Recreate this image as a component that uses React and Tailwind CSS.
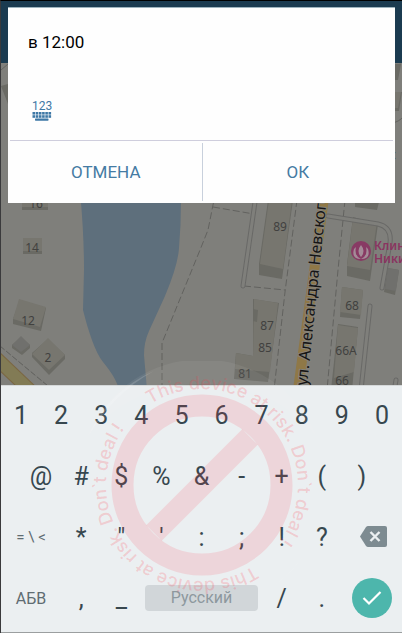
import React from "react";

const houses = [
  { label: "16", x: 36, y: 208 },
  { label: "14", x: 32, y: 252 },
  { label: "12", x: 28, y: 325 },
  { label: "2", x: 48, y: 362 },
  { label: "89", x: 280, y: 231 },
  { label: "87", x: 267, y: 330 },
  { label: "85", x: 265, y: 352 },
  { label: "81", x: 245, y: 378 },
  { label: "68", x: 352, y: 310 },
  { label: "66А", x: 346, y: 355 },
  { label: "66", x: 342, y: 385 },
];

const digits = ["1", "2", "3", "4", "5", "6", "7", "8", "9", "0"];
const symbols = ["@", "#", "$", "%", "&", "-", "+", "(", ")"];
const punctuation = ["*", '"', "'", ":", ";", "!", "?"];

function MapBackground() {
  return (
    <svg
      className="absolute inset-0 h-full w-full"
      viewBox="1 1 401 384"
      preserveAspectRatio="xMidYMin slice"
      aria-hidden="true"
    >
      <rect width="402" height="400" fill="#7f7f7b" />

      {/* River */}
      <path
        d="M76 150 C80 190 84 225 84 270 L83 310 C88 330 95 352 103 362 C110 371 116 378 119 390 L147 390 L144 355 Q144 342 149 331 L165 296 Q178 265 179 248 Q181 225 181 200 L180 150Z"
        fill="#5e6f7c"
      />

      {/* Yellow road in the corner */}
      <path d="M-4 358 L36 396" stroke="#7b6743" strokeWidth="14" />
      <path d="M-4 358 L36 396" stroke="#827b55" strokeWidth="12" />
      <path d="M0 346 L48 386" stroke="#5f5f5c" strokeDasharray="6 2" fill="none" />

      {/* Main street */}
      <path d="M298 390 L325 190" stroke="#8f7847" strokeWidth="10" />

      {/* Footpaths */}
      <g fill="none" stroke="#62625f" strokeDasharray="7 3">
        <path d="M162 390 V343 L200 250 L208 230 L216 190" />
        <path d="M213 207 L254 214" />
        <path d="M297 200 L285 292 L274 390" />
        <path d="M244 286 L285 290" />
        <path d="M345 200 L338 270 L327 390" />
      </g>

      {/* Driveways */}
      <g fill="none" strokeLinecap="round">
        <path d="M256 195 L243 286" stroke="#696967" strokeWidth="5" />
        <path d="M256 195 L243 286" stroke="#7f7f7b" strokeWidth="3" />
        <path d="M370 306 L361 390" stroke="#696967" strokeWidth="5" />
        <path d="M370 306 L361 390" stroke="#7f7f7b" strokeWidth="3" />
        <path d="M396 380 L394 392" stroke="#696967" strokeWidth="5" />
        <path d="M396 380 L394 392" stroke="#7f7f7b" strokeWidth="3" />
        <path d="M392 123 Q399 122 403 117" stroke="#646461" />
        <path d="M1 70 L8 64 M400 64 L394 82" stroke="#646461" />
      </g>

      {/* Building walls */}
      <g fill="#6a6a64">
        <path d="M22 190 H48 V210 H22Z M23 240 H42 V254 H23Z" />
        <path d="M13 319 L20 300 L46 308 L41 331 L13 324Z" />
        <path d="M12 345 L21 337 L30 345 V348 L22 355 L12 348Z" />
        <path d="M32 353 L48 339 L65 355 V359 L49 375 L32 357Z" />
        <path d="M268 200 H293 L282 279 L259 275 V264Z" />
        <path d="M236 353 L253 356 V299 L279 303 L268 382 L234 379Z" />
        <path d="M355 202 H379 L377 210 L355 207Z" />
        <path d="M353 217 L378 224 L370 281 L347 276 V264Z" />
        <path d="M388 268 L399 270 L395 295 L384 292Z" />
        <path d="M342 287 L363 290 L360 319 L340 317Z" />
        <path d="M338 324 L358 327 L352 390 H331Z" />
        <path d="M1 86 L8 84 V104Z M394 64 H401 L398 80 H394Z M394 92 H402 L399 111 H394Z" />
      </g>

      {/* Roofs */}
      <g fill="#77766f">
        <path d="M22 190 H48 V207 H22Z M23 238 H42 V251 H23Z" />
        <path d="M19 299 L46 307 L40 327 L13 319Z" />
        <path d="M32 354 L48 338 L65 355 L49 370Z" />
        <path d="M269 200 H292 L283 269 L260 264Z" />
        <path d="M254 299 L278 303 L270 372 L235 369 L236 353 L253 356Z" />
        <path d="M353 218 L377 222 L370 270 L347 266Z" />
        <path d="M342 287 L363 290 L361 315 L340 312Z" />
        <path d="M338 325 L358 328 L354 372 L334 378Z" />
        <path d="M394 92 H401 L398 108 H394Z" />
      </g>
      <path d="M12 345 L21 336 L30 345 L21 352Z M388 268 L399 270 L396 291 L385 289Z" fill="#70706d" />
      <path d="M253 309 L258 310 L257 322 L253 321Z" fill="#6a6a64" />

      {/* Driveway around the clinic */}
      <g fill="none" strokeLinecap="round">
        <path d="M328 216 L378 224 Q392 227 390 243 L382 288" stroke="#696967" strokeWidth="5" />
        <path d="M328 216 L378 224 Q392 227 390 243 L382 288" stroke="#7f7f7b" strokeWidth="3" />
      </g>

      {houses.map((house) => (
        <text
          key={house.label}
          x={house.x}
          y={house.y}
          textAnchor="middle"
          fontSize="12"
          fontFamily="Noto Sans, sans-serif"
          fill="#41413f"
        >
          {house.label}
        </text>
      ))}

      <text
        transform="translate(307 386) rotate(-84)"
        fontSize="16"
        fontFamily="Noto Sans, sans-serif"
        fill="#151515"
        stroke="#85827a"
        strokeWidth="2"
        paintOrder="stroke"
      >
        ул. Александра Невского
      </text>

      {/* Clinic marker */}
      <circle cx="361" cy="251" r="10" fill="#883a64" />
      <g fill="#a48b98">
        <path d="M361 245 Q366 251 361 257 Q356 251 361 245Z" />
        <path d="M356 247 Q354 256 361 259 Q351 259 354 249Z M366 247 Q368 256 361 259 Q371 259 368 249Z" />
      </g>
      <g fontSize="12" fontWeight="600" fontFamily="Noto Sans, sans-serif" fill="#8a3460">
        <text x="374" y="250">Клин</text>
        <text x="374" y="263">Ники</text>
      </g>
      <text x="390" y="159" fontSize="12" fontFamily="Noto Sans, sans-serif" fill="#3d5a70">
        с
      </text>
    </svg>
  );
}

function NumericInputIcon() {
  return (
    <svg width="20" height="24" viewBox="0 0 20 24" fill="#3e78a6" aria-hidden="true">
      <text x="10" y="12" textAnchor="middle" fontSize="12" fontFamily="Roboto, sans-serif">
        123
      </text>
      {[0, 1, 2, 3, 4, 5].map((i) => (
        <g key={i}>
          <rect x={0.5 + i * 3.2} y="14" width="2.6" height="2.6" />
          <rect x={0.5 + i * 3.2} y="17.2" width="2.6" height="2.6" />
        </g>
      ))}
      <rect x="3" y="20.5" width="13.5" height="2.2" rx="0.6" />
    </svg>
  );
}

function TimeDialog() {
  return (
    <div
      role="dialog"
      aria-label="в 12:00"
      className="relative mx-[7px] mt-[6px] border-t border-[#9db3bd] bg-[#fefefe]"
    >
      <p className="px-5 pt-6 text-[17px] leading-5 text-black">в 12:00</p>
      <button type="button" aria-label="123" className="mt-[46px] ml-6 block">
        <NumericInputIcon />
      </button>
      <div className="mx-0.5 mt-[18px] grid grid-cols-2 border-t border-[#cfcedd] text-[17px] text-[#457ba3]">
        <button type="button" className="h-[62px] pt-0.5">
          ОТМЕНА
        </button>
        <button type="button" className="my-0.5 border-l border-[#c8d0dc] pt-0.5">
          ОК
        </button>
      </div>
    </div>
  );
}

function Key({ label, className = "col-span-2" }) {
  return (
    <button
      type="button"
      className={`flex h-[61px] items-center justify-center pb-0.5 ${className}`}
    >
      {label}
    </button>
  );
}

function Keyboard() {
  return (
    <div className="border-t border-b border-t-[#d5d8d9] border-b-[#9b9fa0] bg-[#ebeff1] pb-[2px] text-[#37474f]">
      <div className="grid grid-cols-20 text-[25px] leading-none">
        {digits.map((digit) => (
          <Key key={digit} label={digit} />
        ))}

        {symbols.map((symbol, i) => (
          <Key
            key={symbol}
            label={symbol}
            className={i === 0 ? "col-span-2 col-start-2" : "col-span-2"}
          />
        ))}

        <Key label="= \ <" className="col-span-3 col-start-1 text-[15px] text-[#5f6c72]" />
        {punctuation.map((symbol) => (
          <Key key={symbol} label={symbol} />
        ))}
        <button
          type="button"
          aria-label="Backspace"
          className="col-span-3 flex items-center justify-center pb-1 pl-1"
        >
          <svg width="27" height="21" viewBox="0 0 27 21" aria-hidden="true">
            <path d="M8 0 H25 Q27 0 27 2 V19 Q27 21 25 21 H8 Q7 21 6 20 L0 10.5 L6 1 Q7 0 8 0Z" fill="#7d8b91" />
            <path d="M10.5 6 L19.5 15 M19.5 6 L10.5 15" stroke="#ebeff1" strokeWidth="2.4" />
          </svg>
        </button>

        <Key label="АБВ" className="col-span-3 text-base text-[#5f6c72]" />
        <Key label="," />
        <Key label="_" />
        <div className="col-span-6 flex items-center px-1 pb-1">
          <button
            type="button"
            className="h-[26px] w-full rounded bg-[#d1d6d9] text-base leading-none text-[#8d989e]"
          >
            Русский
          </button>
        </div>
        <Key label="/" />
        <Key label="." />
        <div className="col-span-3 flex items-center justify-center pb-1">
          <button
            type="button"
            aria-label="Enter"
            className="flex size-10 items-center justify-center rounded-full bg-[#4db6ac]"
          >
            <svg width="20" height="16" viewBox="0 0 20 16" fill="none" aria-hidden="true">
              <path d="M1.5 8 L7 13.5 L18.5 2" stroke="white" strokeWidth="2.2" />
            </svg>
          </button>
        </div>
      </div>
    </div>
  );
}

// Translucent stamp that lies over both the map and the keyboard
function WarningStamp() {
  return (
    <svg
      className="pointer-events-none absolute bottom-[24px] left-1/2 size-[248px] -translate-x-1/2"
      viewBox="-124 -124 248 248"
    >
      <defs>
        <path id="stamp-top" d="M-96 0 A96 96 0 0 1 96 0 A96 96 0 0 1 -96 0" />
        <path id="stamp-bottom" d="M96 0 A96 96 0 0 1 -96 0 A96 96 0 0 1 96 0" />
      </defs>
      <path
        d="M-115 -48 A124 124 0 0 1 115 -48 Q70 -101 0 -101 Q-70 -101 -115 -48Z"
        fill="white"
        fillOpacity="0.06"
      />
      <path d="M-114 -48 A124 124 0 0 1 -48 -114 Q-90 -91 -114 -48Z" fill="white" fillOpacity="0.15" />
      <path d="M113 50 A124 124 0 0 1 62 107 Q97 86 113 50Z" fill="white" fillOpacity="0.4" />
      <g stroke="#ff3b4b" strokeOpacity="0.14" strokeWidth="22" fill="none">
        <path d="M-79.5 0 A79.5 79.5 0 1 1 79.5 0 A79.5 79.5 0 1 1 -79.5 0Z" />
        <path d="M-48 48 L48 -48" />
      </g>
      <g
        fill="#ff3b4b"
        fillOpacity="0.2"
        fontSize="18"
        fontWeight="500"
        fontFamily="Inter, Roboto, sans-serif"
      >
        <text>
          <textPath href="#stamp-top" startOffset="96">This device at risk. Don`t deal !</textPath>
        </text>
        <text>
          <textPath href="#stamp-bottom" startOffset="96">This device at risk. Don`t deal !</textPath>
        </text>
      </g>
    </svg>
  );
}

export default function App() {
  return (
    <div className="relative flex min-h-screen flex-col overflow-hidden border-t border-l border-t-black border-l-[#3a3a3c] font-['Roboto',sans-serif]">
      <main className="relative flex-1 overflow-hidden">
        <MapBackground />
        <div className="absolute inset-x-0 top-0 h-[62px] bg-[#1b3b50]" />
        <TimeDialog />
      </main>
      <Keyboard />
      <WarningStamp />
    </div>
  );
}
